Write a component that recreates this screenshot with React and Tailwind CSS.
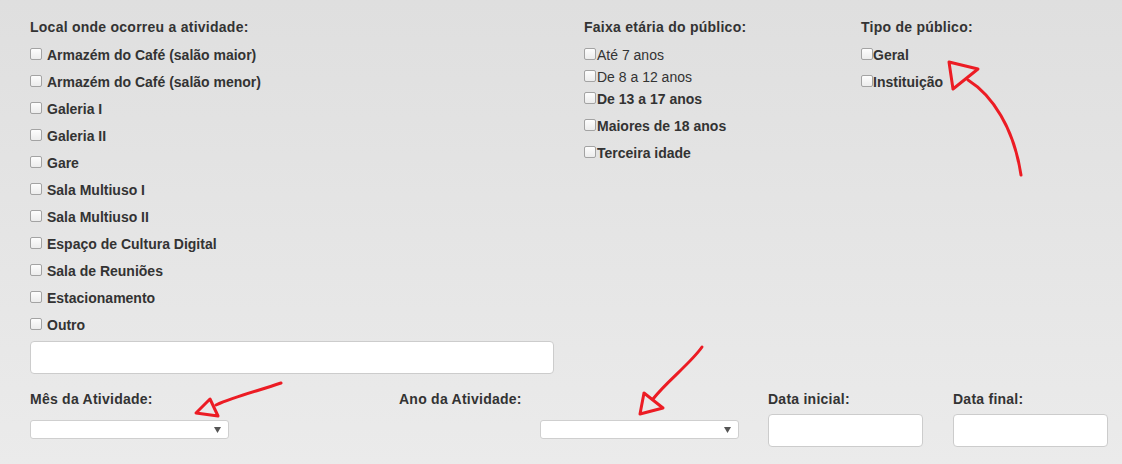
const locais = [
  "Armazém do Café (salão maior)",
  "Armazém do Café (salão menor)",
  "Galeria I",
  "Galeria II",
  "Gare",
  "Sala Multiuso I",
  "Sala Multiuso II",
  "Espaço de Cultura Digital",
  "Sala de Reuniões",
  "Estacionamento",
  "Outro",
];

const faixas = [
  { label: "Até 7 anos", bold: false, mt: "mt-0" },
  { label: "De 8 a 12 anos", bold: false, mt: "mt-[2px]" },
  { label: "De 13 a 17 anos", bold: true, mt: "mt-[2px]" },
  { label: "Maiores de 18 anos", bold: true, mt: "mt-[7px]" },
  { label: "Terceira idade", bold: true, mt: "mt-[7px]" },
];

function Box() {
  return (
    <span className="mt-[3px] block h-[12px] w-[12px] shrink-0 rounded-[2px] border border-[#a3a3a3] bg-linear-to-b from-[#fdfdfd] to-[#ececec]" />
  );
}

function Check({ label, gap = "gap-[5px]", bold = true, className = "" }) {
  return (
    <label className={`flex h-[20px] items-start ${gap} ${className}`}>
      <Box />
      <span className={bold ? "font-bold" : "font-normal"}>{label}</span>
    </label>
  );
}

function Heading({ children, className = "" }) {
  return <p className={`font-bold tracking-[0.25px] ${className}`}>{children}</p>;
}

function Select({ className = "" }) {
  return (
    <div
      className={`relative h-[19px] w-[199px] rounded-[3px] border border-[#cfcfcf] bg-white ${className}`}
    >
      <svg
        className="absolute right-[7px] top-[6px]"
        width="7"
        height="6"
        viewBox="0 0 7 6"
      >
        <path d="M0 0 H7 L3.5 6 Z" fill="#555" />
      </svg>
    </div>
  );
}

function Arrows() {
  return (
    <svg
      className="pointer-events-none absolute left-0 top-0"
      width="1122"
      height="464"
      viewBox="0 0 1122 464"
      fill="none"
      stroke="#ec1c24"
      strokeWidth="3"
      strokeLinejoin="round"
      strokeLinecap="round"
    >
      <path d="M968 80 C992 95 1014 128 1021 175" />
      <path d="M949 62 L978 69 L953 89 Z" />
      <path d="M281 383 C258 391 236 396 216 405" />
      <path d="M210 399 L196 413 L218 416 Z" />
      <path d="M702 347 C690 364 667 381 653 399" />
      <path d="M644 393 L640 414 L663 408 Z" />
    </svg>
  );
}

export default function App() {
  return (
    <div className="relative min-h-[464px] w-full overflow-hidden bg-linear-to-b from-[#dfdfdf] to-[#ebebeb] px-[15px] pt-[17px] font-['Liberation_Sans',Arial,sans-serif] text-[14px] leading-[20px] text-[#333]">
      <div className="flex">
        <div className="w-[554px] shrink-0 px-[15px]">
          <Heading className="mb-[8px]">Local onde ocorreu a atividade:</Heading>
          <div className="flex flex-col gap-[7px]">
            {locais.map((l) => (
              <Check key={l} label={l} />
            ))}
          </div>
          <div className="mt-[6px] h-[33px] w-full rounded-[4px] border border-[#cccccc] bg-white" />
        </div>

        <div className="w-[277px] shrink-0 px-[15px]">
          <Heading className="mb-[8px]">Faixa etária do público:</Heading>
          <div className="flex flex-col">
            {faixas.map((f) => (
              <Check
                key={f.label}
                label={f.label}
                bold={f.bold}
                gap="gap-px"
                className={f.mt}
              />
            ))}
          </div>
        </div>

        <div className="w-[277px] shrink-0 px-[15px]">
          <Heading className="mb-[8px]">Tipo de público:</Heading>
          <div className="flex flex-col gap-[7px]">
            <Check label="Geral" gap="gap-0" />
            <Check label="Instituição" gap="gap-0" />
          </div>
        </div>
      </div>

      <div className="mt-[15px] flex">
        <div className="w-[369px] shrink-0 px-[15px]">
          <Heading>Mês da Atividade:</Heading>
          <Select className="mt-[11px]" />
        </div>
        <div className="w-[369px] shrink-0 px-[15px]">
          <Heading>Ano da Atividade:</Heading>
          <Select className="ml-[141px] mt-[11px]" />
        </div>
        <div className="w-[185px] shrink-0 px-[15px]">
          <Heading>Data inicial:</Heading>
          <div className="mt-[5px] h-[33px] w-full rounded-[4px] border border-[#cccccc] bg-white" />
        </div>
        <div className="w-[185px] shrink-0 px-[15px]">
          <Heading>Data final:</Heading>
          <div className="mt-[5px] h-[33px] w-full rounded-[4px] border border-[#cccccc] bg-white" />
        </div>
      </div>

      <Arrows />
    </div>
  );
}
